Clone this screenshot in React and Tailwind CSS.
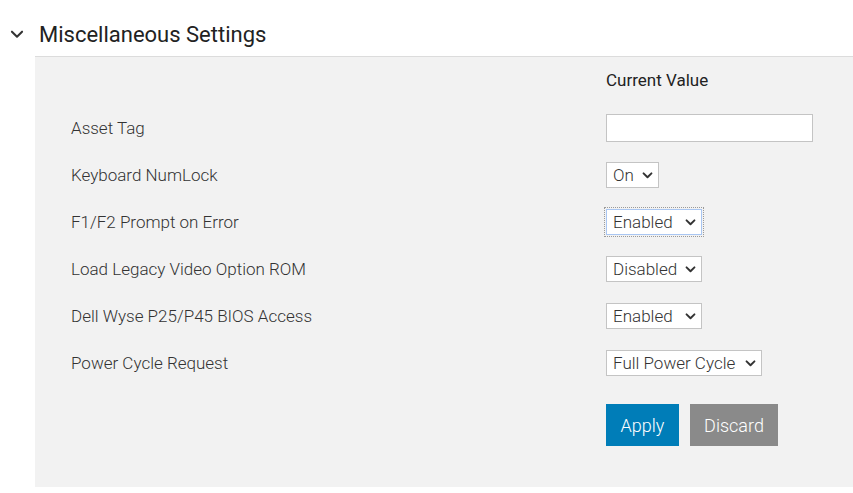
import React from "react";

const rows = [
    { label: "Asset Tag", type: "input" },
    { label: "Keyboard NumLock", type: "select", value: "On", options: ["On", "Off"], width: "w-[53px]" },
    { label: "F1/F2 Prompt on Error", type: "select", value: "Enabled", options: ["Enabled", "Disabled"], width: "w-[96px]", focused: true },
    { label: "Load Legacy Video Option ROM", type: "select", value: "Disabled", options: ["Enabled", "Disabled"], width: "w-[96px]" },
    { label: "Dell Wyse P25/P45 BIOS Access", type: "select", value: "Enabled", options: ["Enabled", "Disabled"], width: "w-[96px]" },
    { label: "Power Cycle Request", type: "select", value: "Full Power Cycle", options: ["None", "Full Power Cycle"], width: "w-[156px]" },
];

const Chevron = ({ className, strokeWidth = 2.2 }) => (
    <svg viewBox="0 0 12 8" className={className} fill="none" stroke="currentColor" strokeWidth={strokeWidth} strokeLinecap="round" strokeLinejoin="round">
        <path d="M1.5 1.5l4.5 4.5 4.5-4.5" />
    </svg>
);

const SelectBox = props => {
    const [value, setValue] = React.useState(props.value);
    const boxClass = props.focused
        ? "border-[#a9c6f2] outline outline-dotted outline-1 outline-[#9a9a9a] outline-offset-1"
        : "border-[#c4c4c4]";
    return (
        <div className={`relative h-[26px] bg-white border ${boxClass} ${props.width}`}>
            <select
                value={value}
                onChange={e => setValue(e.target.value)}
                className="appearance-none w-full h-full bg-transparent pl-[6px] pr-5 text-[17px] font-light text-[#333] outline-none"
            >
                {props.options.map(o => <option key={o}>{o}</option>)}
            </select>
            <Chevron className="absolute right-[5px] top-[9px] w-[11px] h-[7px] text-[#333] pointer-events-none" />
        </div>
    );
};

export default function App() {
    return (
        <div className="w-[853px] h-[493px] bg-white overflow-hidden" style={{ fontFamily: "Roboto, 'Liberation Sans', sans-serif" }}>
            <div className="h-[56px] pt-[12px] flex items-center">
                <Chevron className="ml-[10px] w-[14px] h-[9px] text-[#333]" strokeWidth={1.8} />
                <h2 className="ml-[15px] text-[22px] text-[#222]">Miscellaneous Settings</h2>
            </div>
            <div className="ml-[35px] h-[431px] bg-[#f2f2f2] border-t border-[#dcdcdc]">
                <div className="grid grid-cols-[535px_1fr] pl-[36px]">
                    <div className="h-[47px]" />
                    <div className="h-[47px] flex items-center text-[17px] text-[#222]">Current Value</div>
                    {rows.map(row => (
                        <React.Fragment key={row.label}>
                            <div className="h-[47px] pt-[2px] flex items-center text-[17px] font-light text-[#333]">{row.label}</div>
                            <div className="h-[47px] flex items-center">
                                {row.type === "input" ? (
                                    <input type="text" className="w-[207px] h-[28px] bg-white border border-[#c4c4c4] outline-none px-1" />
                                ) : (
                                    <SelectBox {...row} />
                                )}
                            </div>
                        </React.Fragment>
                    ))}
                    <div />
                    <div className="flex gap-[11px] mt-[18px]">
                        <button className="w-[73px] h-[42px] bg-[#007db8] text-white text-[18px] font-light">Apply</button>
                        <button className="w-[88px] h-[42px] bg-[#8a8a8a] text-white text-[18px] font-light">Discard</button>
                    </div>
                </div>
            </div>
        </div>
    );
}
